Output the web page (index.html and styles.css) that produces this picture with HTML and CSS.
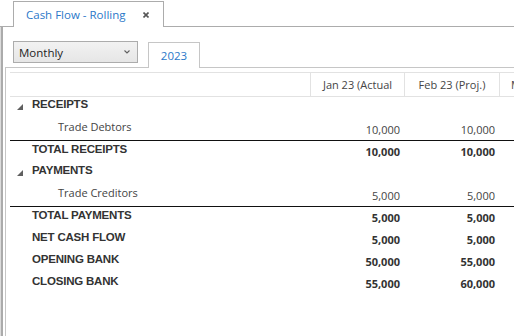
FILE: index.html
```html
<!DOCTYPE html>
<html>
<head>
<meta charset="utf-8">
<link rel="stylesheet" href="styles.css">
</head>
<body>
<div class="tabstrip">
  <div class="doc-tab">
    <span class="doc-title">Cash Flow - Rolling</span>
    <svg class="close" width="6" height="6" viewBox="0 0 6 6"><path d="M0.5 0.5 L5.5 5.5 M5.5 0.5 L0.5 5.5" stroke="#555" stroke-width="1.6" fill="none"/></svg>
  </div>
</div>
<div class="outer">
  <div class="toolbar">
    <div class="combo">
      <span class="combo-text">Monthly</span>
      <svg class="chev" width="6" height="4" viewBox="0 0 6 4"><path d="M0.5 0.5 L3 3 L5.5 0.5" stroke="#606060" stroke-width="1.1" fill="none"/></svg>
    </div>
    <div class="year-tab">2023</div>
  </div>
  <div class="panel">
    <div class="grid">
      <div class="row head">
        <div class="cell"></div>
        <div class="cell hc">Jan 23 (Actual</div>
        <div class="cell hc">Feb 23 (Proj.)</div>
        <div class="cell hc hc-left">Mar 23 (Proj.)</div>
      </div>
      <div class="row">
        <div class="cell lbl group"><svg class="exp" width="6" height="6" viewBox="0 0 6 6"><polygon points="6,0 6,6 0,6" fill="#5f5f5f"/></svg><span class="blbl">RECEIPTS</span></div>
        <div class="cell val"></div><div class="cell val"></div><div class="cell val"></div>
      </div>
      <div class="row sep">
        <div class="cell lbl child">Trade Debtors</div>
        <div class="cell val">10,000</div><div class="cell val">10,000</div><div class="cell val"></div>
      </div>
      <div class="row bold">
        <div class="cell lbl top"><span class="blbl">TOTAL RECEIPTS</span></div>
        <div class="cell val">10,000</div><div class="cell val">10,000</div><div class="cell val"></div>
      </div>
      <div class="row">
        <div class="cell lbl group"><svg class="exp" width="6" height="6" viewBox="0 0 6 6"><polygon points="6,0 6,6 0,6" fill="#5f5f5f"/></svg><span class="blbl">PAYMENTS</span></div>
        <div class="cell val"></div><div class="cell val"></div><div class="cell val"></div>
      </div>
      <div class="row sep">
        <div class="cell lbl child">Trade Creditors</div>
        <div class="cell val">5,000</div><div class="cell val">5,000</div><div class="cell val"></div>
      </div>
      <div class="row bold">
        <div class="cell lbl top"><span class="blbl">TOTAL PAYMENTS</span></div>
        <div class="cell val">5,000</div><div class="cell val">5,000</div><div class="cell val"></div>
      </div>
      <div class="row bold">
        <div class="cell lbl top"><span class="blbl">NET CASH FLOW</span></div>
        <div class="cell val">5,000</div><div class="cell val">5,000</div><div class="cell val"></div>
      </div>
      <div class="row bold">
        <div class="cell lbl top"><span class="blbl">OPENING BANK</span></div>
        <div class="cell val">50,000</div><div class="cell val">55,000</div><div class="cell val"></div>
      </div>
      <div class="row bold">
        <div class="cell lbl top"><span class="blbl">CLOSING BANK</span></div>
        <div class="cell val">55,000</div><div class="cell val">60,000</div><div class="cell val"></div>
      </div>
    </div>
  </div>
</div>
</body>
</html>
```

FILE: styles.css
```css
* { box-sizing: border-box; }
html, body {
  margin: 0;
  padding: 0;
  width: 514px;
  height: 336px;
  overflow: hidden;
  background: #fff;
  font-family: "Open Sans", "Noto Sans", sans-serif;
  font-size: 11px;
  color: #444;
}
.tabstrip {
  display: flex;
  align-items: flex-end;
  height: 27px;
  padding-left: 13px;
  border-bottom: 1px solid #acacac;
}
.doc-tab {
  flex: none;
  width: 151px;
  height: 26px;
  margin-bottom: -1px;
  background: #fff;
  border: 1px solid #acacac;
  border-bottom: none;
  display: flex;
  align-items: center;
  justify-content: space-between;
  padding: 0 14px 1px 12px;
}
.doc-title {
  color: #2b78c9;
  font-size: 11.5px;
}
.close { display: block; margin-top: 1px; }
.outer {
  height: 309px;
  border-left: 1px solid #dcdcdc;
  padding-left: 2px;
  box-shadow: inset 2px 0 0 #ababab;
}
.toolbar {
  display: flex;
  align-items: flex-end;
  height: 41px;
  margin-left: 2px;
  padding-left: 8px;
  border-bottom: 1px solid #c6c6c6;
}
.combo {
  flex: none;
  width: 125px;
  height: 22px;
  margin-bottom: 4px;
  border: 1px solid #acacac;
  background: linear-gradient(#f2f2f2, #e6e6e6);
  display: flex;
  align-items: center;
  justify-content: space-between;
  padding: 0 7px 0 5px;
}
.combo-text {
  color: #1e1e1e;
  font-size: 11.5px;
}
.chev { display: block; margin-top: -1px; }
.year-tab {
  flex: none;
  width: 52px;
  height: 26px;
  margin: 0 0 -1px 10px;
  background: #fff;
  border: 1px solid #c6c6c6;
  border-bottom: none;
  text-align: center;
  line-height: 25px;
  color: #2b78c9;
  font-size: 11.5px;
}
.panel {
  margin-left: 2px;
  height: 268px;
  border-left: 1px solid #c6c6c6;
  padding: 4px 0 0 4px;
}
.row {
  display: grid;
  grid-template-columns: 300px 94px 95px 1fr;
  height: 22px;
}
.row.head {
  height: 25px;
  border-top: 1px solid #e2e2e2;
  border-bottom: 1px solid #e2e2e2;
}
.cell {
  white-space: nowrap;
  overflow: hidden;
}
.hc {
  border-left: 1px solid #e2e2e2;
  text-align: center;
  line-height: 23px;
  color: #454545;
}
.hc-left {
  text-align: left;
  padding-left: 11px;
}
.lbl {
  line-height: 15px;
}
.blbl {
  font-family: "Liberation Sans", Arial, sans-serif;
  font-weight: 700;
  font-size: 11.5px;
  letter-spacing: -0.2px;
  color: #333;
}
.group {
  display: flex;
  align-items: flex-start;
  padding-left: 7px;
}
.exp {
  display: block;
  margin: 7px 9px 0 0;
  flex: none;
}
.child {
  padding-left: 48px;
}
.top {
  padding-left: 22px;
}
.bold {
  font-weight: 700;
  color: #333;
}
.val {
  text-align: right;
  padding: 3px 4px 0 0;
  line-height: 15px;
}
.row.sep {
  border-bottom: 1px solid #111;
}
```
